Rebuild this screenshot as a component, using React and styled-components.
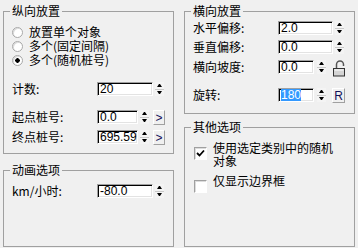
import React from 'react'
import styled, { createGlobalStyle } from 'styled-components'

const Global = createGlobalStyle`
body {
  margin: 0;
  background: #f0f0f0;
  font-family: "Noto Sans CJK SC", "Liberation Sans", sans-serif;
  font-size: 12px;
  color: #000;
}
`
const Page = styled.div`
display: flex;
gap: 10px;
width: 358px;
height: 248px;
box-sizing: border-box;
padding: 4px 0 0 3px;
`
const Column = styled.div`
display: flex;
flex-direction: column;
gap: ${props => props.gap}px;
width: 171px;
`
const Group = styled.fieldset`
margin: 0;
padding: 0 8px;
min-width: 0;
height: ${props => props.h}px;
box-sizing: border-box;
border: 1px solid #a0a0a0;
`
const Title = styled.legend`
padding: 0 2px;
margin-left: -2px;
line-height: 14px;
font-size: 12px;
`
const RadioList = styled.div`
display: flex;
flex-direction: column;
margin-top: 7px;
`
const RadioRow = styled.div`
display: flex;
align-items: center;
height: 14px;
line-height: 14px;
`
const RadioDot = styled.span`
width: 11px;
height: 11px;
box-sizing: border-box;
border-radius: 50%;
border: 1px solid #a9a9a9;
margin-right: 6px;
background: ${props => props.on
  ? 'radial-gradient(circle, #000 0 2px, #fff 2.5px)'
  : '#fff'};
box-shadow: inset 1px 1px 0 #dcdcdc;
`
const Row = styled.div`
display: flex;
align-items: flex-start;
margin-top: ${props => props.mt}px;
`
const Label = styled.span`
width: 85px;
flex: none;
line-height: 14px;
white-space: nowrap;
`
const Field = styled.div`
width: ${props => props.w}px;
height: 14px;
flex: none;
box-sizing: border-box;
background: #fff;
border: 1px solid;
border-color: #a0a0a0 #fff #fff #a0a0a0;
box-shadow: inset 1px 1px 0 #000, inset -1px -1px 0 #e3e3e3;
padding: 0 0 0 2px;
font-family: "Liberation Sans", sans-serif;
font-size: 12px;
line-height: 12px;
overflow: hidden;
white-space: nowrap;
`
const Selected = styled.span`
background: #3399ff;
color: #fff;
`
const Spin = styled.div`
display: flex;
flex-direction: column;
width: 9px;
height: 14px;
flex: none;
margin-left: ${props => props.ml || 2}px;
`
const SpinHalf = styled.div`
flex: 1;
display: flex;
align-items: center;
justify-content: center;
background: #f4f4f4;
border-top: ${props => props.down ? '1px solid #c8c8c8' : 'none'};
&::after {
  content: "";
  width: 1px;
  border-left: 2px solid transparent;
  border-right: 2px solid transparent;
  ${props => props.down ? 'border-top: 3px solid #000;' : 'border-bottom: 3px solid #000;'}
}
`
const SmallButton = styled.div`
width: ${props => props.w || 12}px;
height: 15px;
flex: none;
box-sizing: border-box;
margin-left: ${props => props.ml || 4}px;
border: 1px solid;
border-color: #fff #a0a0a0 #a0a0a0 #fff;
display: flex;
align-items: center;
justify-content: center;
font-family: "Liberation Sans", sans-serif;
font-size: 12px;
color: #10105a;
`
const LockBox = styled.div`
width: 14px;
height: 17px;
flex: none;
margin-left: 6px;
`
const CheckRow = styled.div`
display: flex;
align-items: flex-start;
margin-top: ${props => props.mt}px;
`
const CheckBox = styled.span`
width: 13px;
height: 13px;
flex: none;
box-sizing: border-box;
margin: ${props => props.top}px 6px 0 1px;
background: #fff;
border: 1px solid;
border-color: #a0a0a0 #fff #fff #a0a0a0;
box-shadow: inset 1px 1px 0 #dcdcdc;
display: flex;
align-items: center;
justify-content: center;
`
const CheckText = styled.span`
width: 126px;
line-height: 13px;
`

const Spinner = ({ ml }) => (
  <Spin ml={ml}>
    <SpinHalf />
    <SpinHalf down />
  </Spin>
)

const Lock = () => (
  <LockBox>
    <svg width="14" height="17" viewBox="0 0 14 17">
      <path d="M4.5 8 V4.5 A3.5 3.5 0 0 1 11.5 4.5 V6" fill="none" stroke="#555" strokeWidth="1.5" />
      <rect x="1.5" y="8.5" width="11" height="7.5" fill="#d4d4d4" stroke="#333" />
      <line x1="2.5" y1="10" x2="11.5" y2="10" stroke="#fff" />
    </svg>
  </LockBox>
)

const App = () => {
  return (
    <>
      <Global />
      <Page>
        <Column gap={9}>
          <Group h={150}>
            <Title>纵向放置</Title>
            <RadioList>
              <RadioRow><RadioDot />放置单个对象</RadioRow>
              <RadioRow><RadioDot />多个(固定间隔)</RadioRow>
              <RadioRow><RadioDot on />多个(随机桩号)</RadioRow>
            </RadioList>
            <Row mt={15}>
              <Label>计数:</Label>
              <Field w={56}>20</Field>
              <Spinner />
            </Row>
            <Row mt={14}>
              <Label>起点桩号:</Label>
              <Field w={41}>0.0</Field>
              <Spinner />
              <SmallButton>&gt;</SmallButton>
            </Row>
            <Row mt={5}>
              <Label>终点桩号:</Label>
              <Field w={41}>695.595</Field>
              <Spinner />
              <SmallButton>&gt;</SmallButton>
            </Row>
          </Group>
          <Group h={84}>
            <Title>动画选项</Title>
            <Row mt={7}>
              <Label>km/小时:</Label>
              <Field w={56}>-80.0</Field>
              <Spinner />
            </Row>
          </Group>
        </Column>
        <Column gap={6}>
          <Group h={110}>
            <Title>横向放置</Title>
            <Row mt={3}>
              <Label>水平偏移:</Label>
              <Field w={55}>2.0</Field>
              <Spinner />
            </Row>
            <Row mt={5}>
              <Label>垂直偏移:</Label>
              <Field w={55}>0.0</Field>
              <Spinner />
            </Row>
            <Row mt={6}>
              <Label>横向坡度:</Label>
              <Field w={36}>0.0</Field>
              <Spinner ml={3} />
              <Lock />
            </Row>
            <Row mt={11}>
              <Label>旋转:</Label>
              <Field w={36}><Selected>180</Selected></Field>
              <Spinner ml={3} />
              <SmallButton w={13} ml={6}>R</SmallButton>
            </Row>
          </Group>
          <Group h={127}>
            <Title>其他选项</Title>
            <CheckRow mt={7}>
              <CheckBox top={6}>
                <svg width="9" height="9" viewBox="0 0 9 9">
                  <path d="M1 4 L3.5 6.5 L8 1.5" fill="none" stroke="#000" strokeWidth="1.8" />
                </svg>
              </CheckBox>
              <CheckText>使用选定类别中的随机对象</CheckText>
            </CheckRow>
            <CheckRow mt={7}>
              <CheckBox top={6} />
              <CheckText>仅显示边界框</CheckText>
            </CheckRow>
          </Group>
        </Column>
      </Page>
    </>
  )
}

export default App
